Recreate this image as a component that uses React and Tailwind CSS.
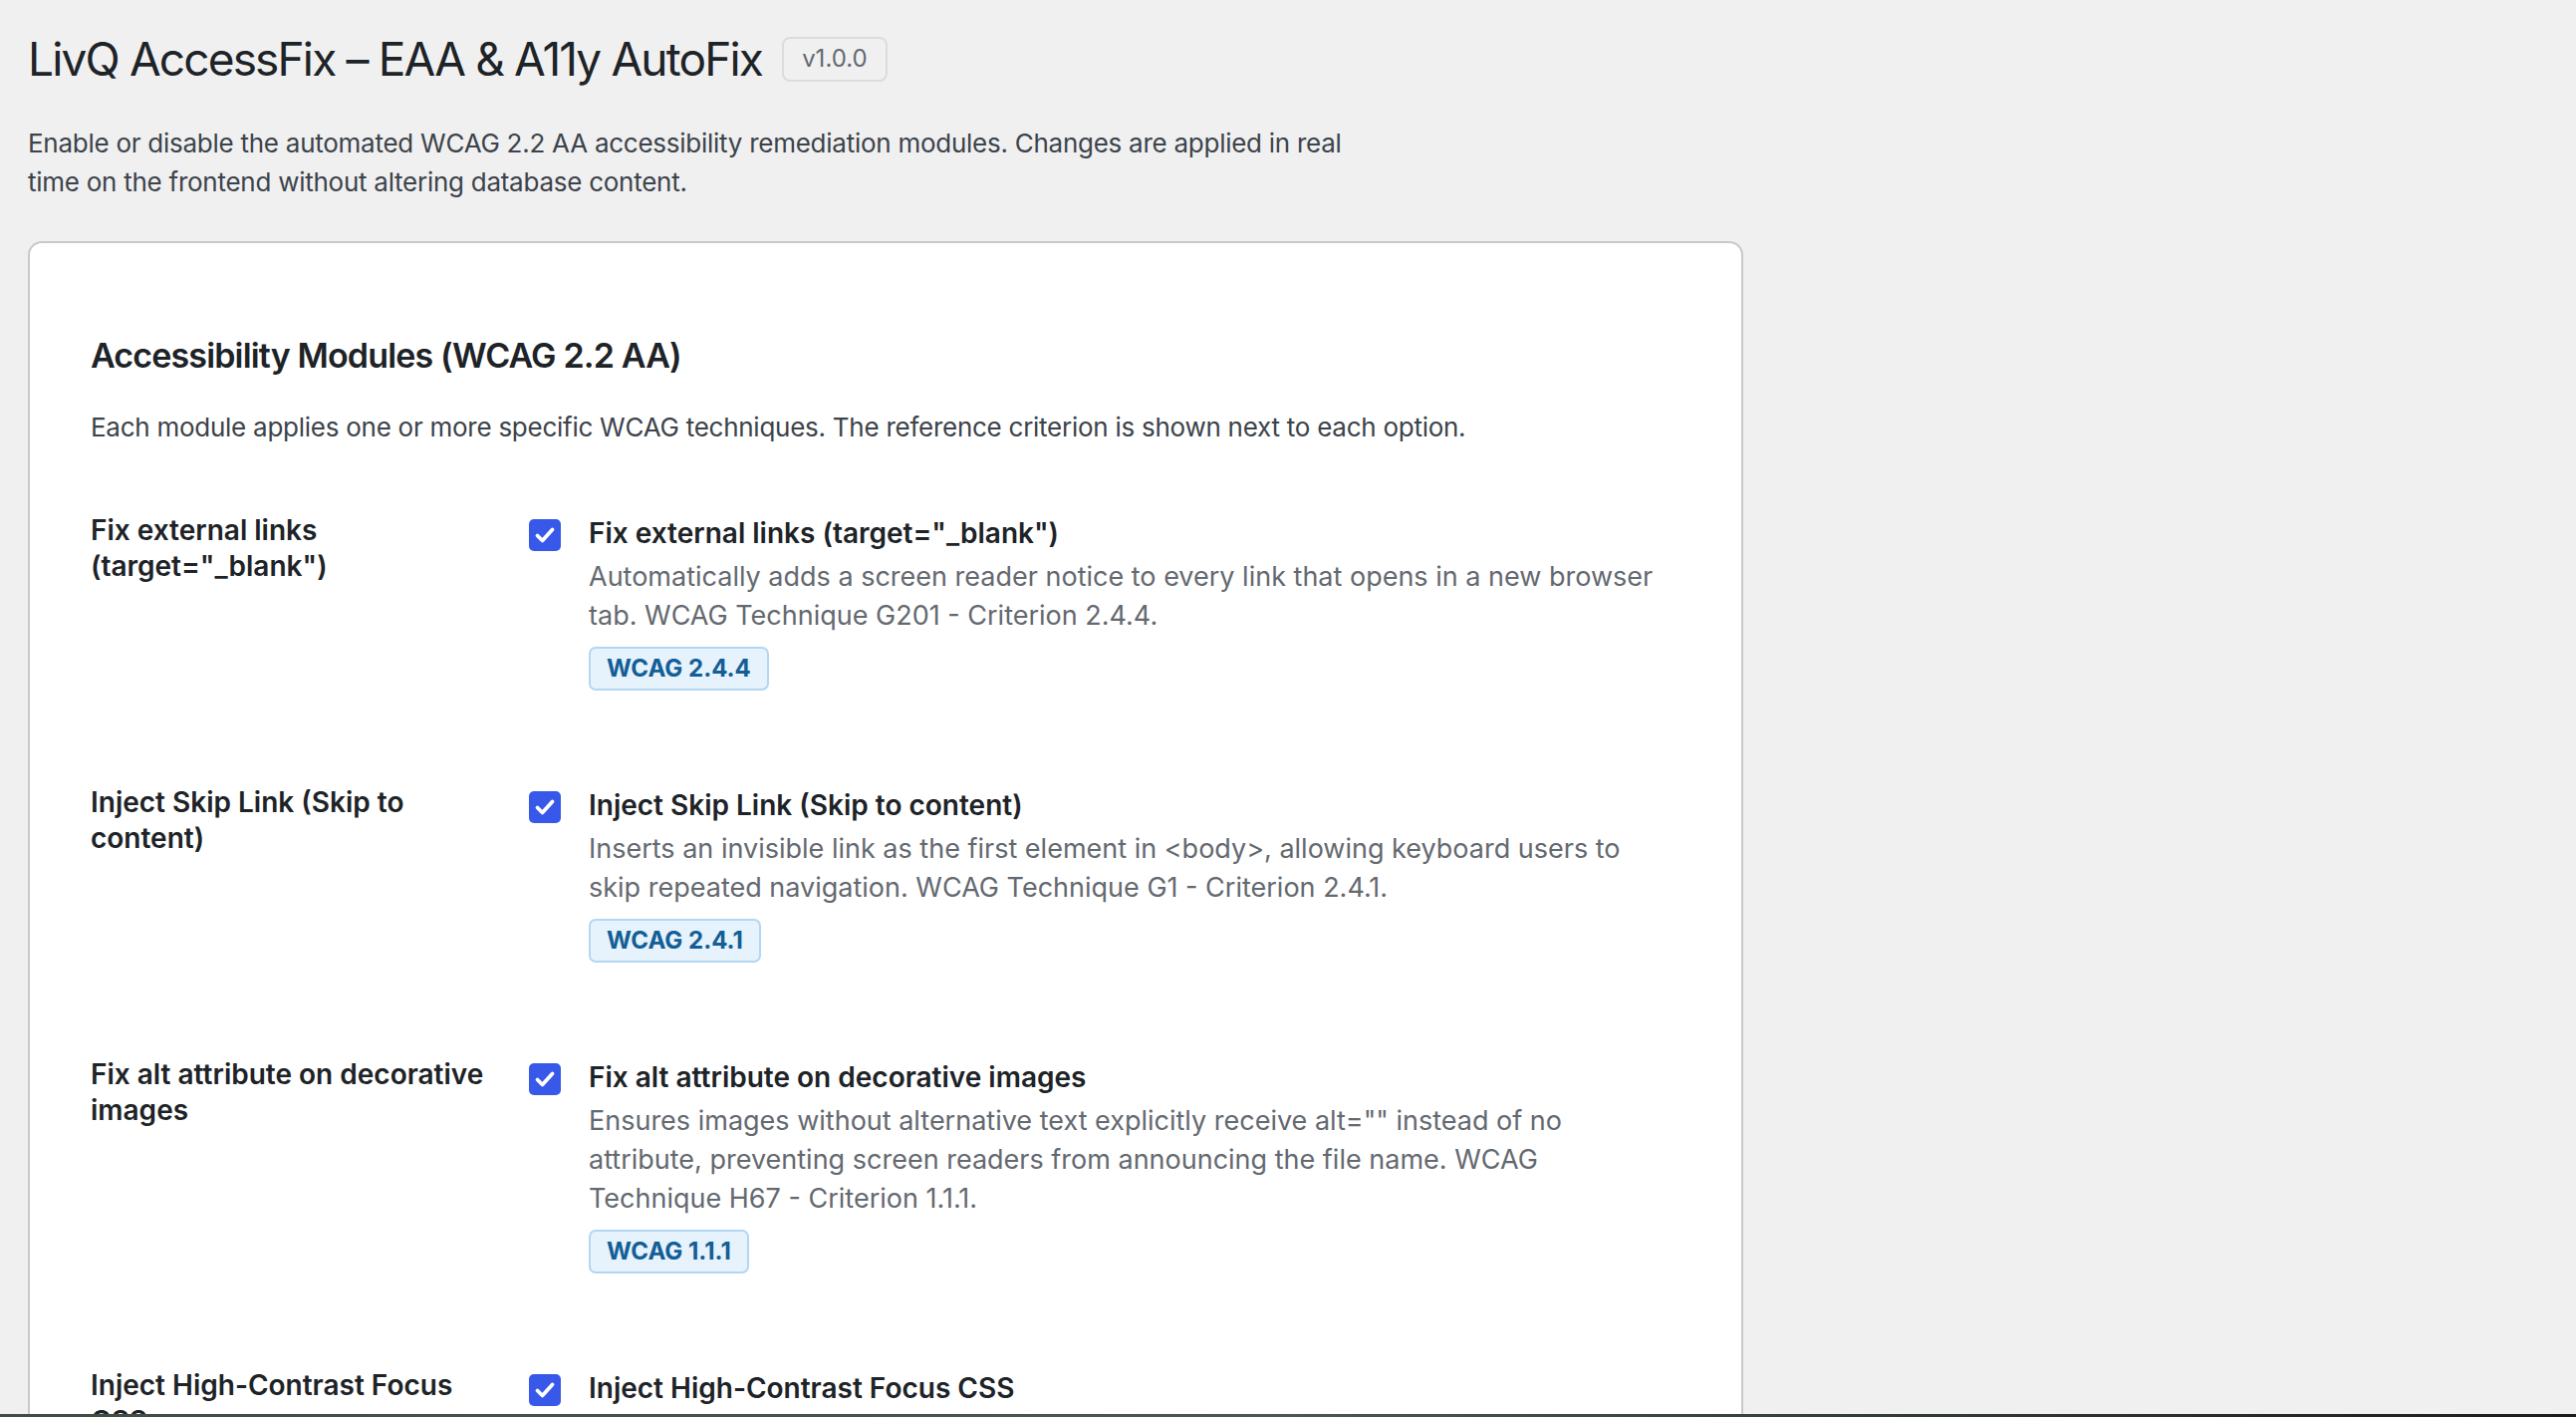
import React from 'react';

const font = { fontFamily: 'Inter, "Noto Sans", sans-serif' };

const modules = [
  {
    id: 'external',
    label: ['Fix external links', '(target="_blank")'],
    title: 'Fix external links (target="_blank")',
    desc: [
      'Automatically adds a screen reader notice to every link that opens in a new browser',
      'tab. WCAG Technique G201 - Criterion 2.4.4.',
    ],
    badge: 'WCAG 2.4.4',
  },
  {
    id: 'skip',
    label: ['Inject Skip Link (Skip to', 'content)'],
    title: 'Inject Skip Link (Skip to content)',
    desc: [
      'Inserts an invisible link as the first element in <body>, allowing keyboard users to',
      'skip repeated navigation. WCAG Technique G1 - Criterion 2.4.1.',
    ],
    badge: 'WCAG 2.4.1',
  },
  {
    id: 'alt',
    label: ['Fix alt attribute on decorative', 'images'],
    title: 'Fix alt attribute on decorative images',
    desc: [
      'Ensures images without alternative text explicitly receive alt="" instead of no',
      'attribute, preventing screen readers from announcing the file name. WCAG',
      'Technique H67 - Criterion 1.1.1.',
    ],
    badge: 'WCAG 1.1.1',
  },
  {
    id: 'focus',
    label: ['Inject High-Contrast Focus', 'CSS'],
    title: 'Inject High-Contrast Focus CSS',
    desc: [
      'Adds a clearly visible focus outline to every interactive element for keyboard',
      'navigation. WCAG Technique C40 - Criterion 2.4.7.',
    ],
    badge: 'WCAG 2.4.7',
  },
];

// Checkbox coché (style admin WP, schéma moderne)
const Checkbox = () => (
  <span className="mt-[4px] flex h-[32px] w-[32px] shrink-0 items-center justify-center rounded-[5px] bg-[#3858e9]">
    <svg width="24" height="24" viewBox="0 0 24 24" fill="none">
      <path d="M4.5 12.5l5 5 10-11" stroke="#fff" strokeWidth="3.8" strokeLinecap="round" strokeLinejoin="round" />
    </svg>
  </span>
);

const ModuleRow = ({ mod }) => (
  <div className="flex pb-[94px]">
    {/* Libellé (th) */}
    <div className="w-[440px] shrink-0 text-[28px] font-semibold leading-[36px] text-[#1d2327]">
      {mod.label.map((line) => (
        <div key={line} className="whitespace-nowrap">{line}</div>
      ))}
    </div>

    {/* Option (td) */}
    <div className="flex gap-[28px] pt-[3px]">
      <Checkbox />
      <div>
        <div className="whitespace-nowrap text-[28px] font-semibold leading-[36px] text-[#1d2327]">
          {mod.title}
        </div>
        <div className="mt-[6px] text-[27px] leading-[39px] text-[#646970]">
          {mod.desc.map((line) => (
            <div key={line} className="whitespace-nowrap">{line}</div>
          ))}
        </div>
        <span className="mt-[12px] inline-flex h-[44px] items-center rounded-[7px] border-2 border-[#b3d7f2] bg-[#e6f2fc] px-[16px] text-[24px] font-bold text-[#135e96]">
          {mod.badge}
        </span>
      </div>
    </div>
  </div>
);

export default function App() {
  return (
    <div className="relative h-[1422px] w-full overflow-hidden bg-[#f0f0f1]" style={font}>
      <div className="pl-[28px] pt-[29px]">
        {/* Header */}
        <div className="flex items-center gap-[20px]">
          <h1 className="text-[46px] font-normal leading-[60px] tracking-[-0.04em] text-[#1d2327]">
            LivQ AccessFix – EAA &amp; A11y AutoFix
          </h1>
          <span className="flex h-[45px] items-center rounded-[8px] border-2 border-[#dcdcde] bg-[#f0f0f1] px-[18px] text-[24px] text-[#646970]">
            v1.0.0
          </span>
        </div>

        <p className="mt-[35px] text-[26px] leading-[39px] tracking-[-0.01em] text-[#3c434a]">
          Enable or disable the automated WCAG 2.2 AA accessibility remediation modules. Changes are applied in real
          <br />
          time on the frontend without altering database content.
        </p>

        {/* Carte des modules */}
        <div className="mt-[40px] w-[1722px] rounded-[14px] border-2 border-[#c8c9cc] bg-white px-[61px] pt-[91px]">
          <h2 className="text-[34px] font-semibold leading-[44px] tracking-[-0.025em] text-[#1d2327]">
            Accessibility Modules (WCAG 2.2 AA)
          </h2>
          <p className="mt-[30px] text-[26px] leading-[39px] tracking-[-0.01em] text-[#3c434a]">
            Each module applies one or more specific WCAG techniques. The reference criterion is shown next to each option.
          </p>

          <div className="mt-[66px]">
            {modules.map((mod) => (
              <ModuleRow key={mod.id} mod={mod} />
            ))}
          </div>
        </div>
      </div>

      {/* Bord du bureau visible en bas */}
      <div className="absolute bottom-0 left-0 h-[3px] w-full bg-gradient-to-r from-[#3f4d45] via-[#4a5850] to-[#1c1c1c]" />
    </div>
  );
}
